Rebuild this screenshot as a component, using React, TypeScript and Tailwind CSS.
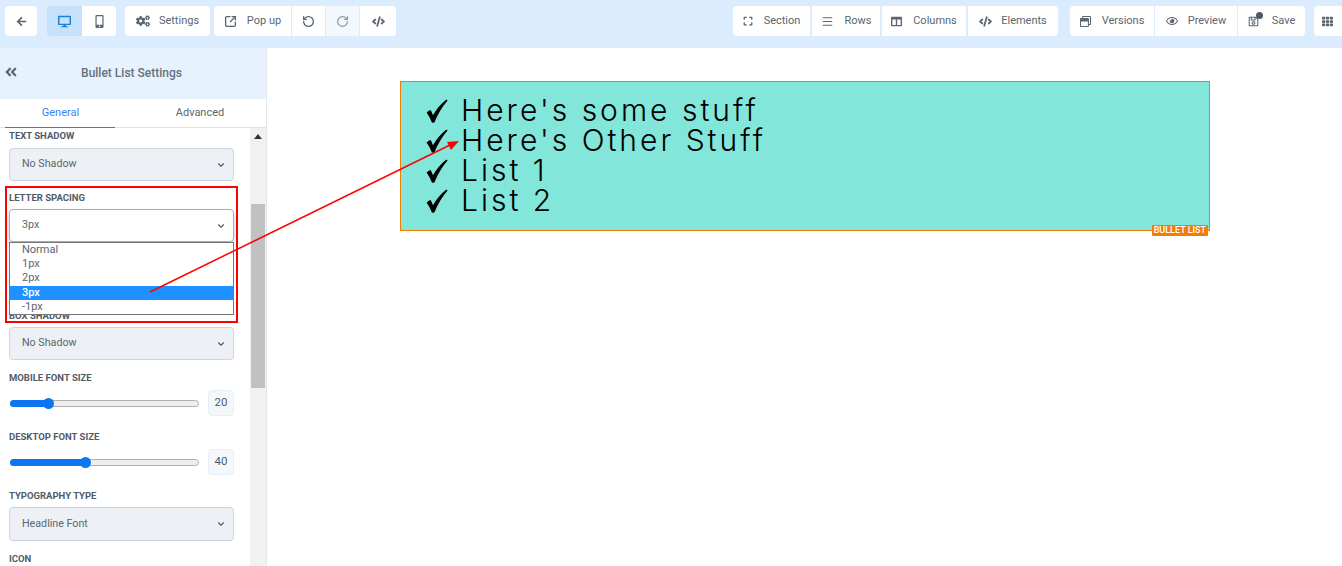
import type { ReactNode } from "react";
import {
  FaAngleDoubleLeft,
  FaArrowLeft,
  FaCode,
  FaCogs,
  FaColumns,
  FaDesktop,
  FaExpand,
  FaMobileAlt,
  FaRegEye,
  FaRegSave,
  FaRegWindowRestore,
  FaTh,
} from "react-icons/fa";
import { ChevronDown, Menu, RotateCcw, RotateCw, SquareArrowOutUpRight } from "lucide-react";

function ToolButton({
  icon,
  label,
  className = "",
}: {
  icon: ReactNode;
  label?: string;
  className?: string;
}) {
  return (
    <div className={`flex h-[30px] items-center justify-center gap-[9px] bg-white text-[11px] text-[#5b6670] ${className}`}>
      {icon}
      {label && <span>{label}</span>}
    </div>
  );
}

function FieldLabel({ children, className = "" }: { children: ReactNode; className?: string }) {
  return (
    <div className={`h-3 text-[9.5px] leading-3 font-bold text-[#4f5b67] uppercase ${className}`}>
      {children}
    </div>
  );
}

function SelectBox({
  value,
  active = false,
  className = "",
}: {
  value: string;
  active?: boolean;
  className?: string;
}) {
  return (
    <div
      className={`flex items-center justify-between rounded-[4px] border pr-[7px] pl-3 text-[10.7px] text-[#5b6670] ${
        active ? "border-[#a3adba] bg-white" : "border-[#cdd5df] bg-[#edf1f6]"
      } ${className}`}
    >
      <span>{value}</span>
      <ChevronDown size={10} strokeWidth={2.6} className="text-[#4f5b67]" />
    </div>
  );
}

function SliderRow({ value, fill }: { value: string; fill: string }) {
  return (
    <div className="mt-1.5 flex h-[26px] items-center justify-between">
      <div className="relative ml-px h-[7px] w-[189px] rounded-full border border-[#b0b0b0] bg-[#eeeeee]">
        <div className={`absolute top-[-1px] left-[-1px] h-[7px] rounded-l-full bg-[#0b76f0] ${fill}`}>
          <div className="absolute top-[-2px] right-[-5px] h-[11px] w-[11px] rounded-full bg-[#0b76f0]" />
        </div>
      </div>
      <div className="flex h-[26px] w-[26px] items-center justify-center rounded-[4px] border border-[#e8eef4] bg-[#f4f8fb] text-[11.5px] text-[#4f5b67]">
        {value}
      </div>
    </div>
  );
}

function CheckMark() {
  return (
    <svg width="22" height="24" viewBox="0 0 22 24" className="shrink-0">
      <path d="M0.6 13.4 Q3 11.4 4.6 11 Q6 13.4 7 16.2 Q12 7 20.4 0.4 L21.6 1.4 Q13 11.4 8.4 23.6 L6 23.8 Q3.6 17.4 0.6 13.4 Z" fill="#000000" />
    </svg>
  );
}

const LIST_ITEMS = ["Here's some stuff", "Here's Other Stuff", "List 1", "List 2"];
const OPTIONS = ["Normal", "1px", "2px", "3px", "-1px"];

export default function App() {
  return (
    <div className="relative flex h-[566px] w-[1342px] flex-col overflow-hidden bg-white font-['Roboto',sans-serif]">
      {/* Top toolbar */}
      <header className="flex h-12 shrink-0 items-start justify-between bg-[#dbecfe] pt-1.5 pl-[5px]">
        <div className="flex items-center">
          <ToolButton icon={<FaArrowLeft size={11} />} className="w-8 rounded-[4px] text-[#4b5563]" />
          <div className="ml-2.5 flex overflow-hidden rounded-[4px]">
            <ToolButton icon={<FaDesktop size={13} className="text-[#1b7fd6]" />} className="w-[35px] !bg-[#c5e1fc]" />
            <ToolButton icon={<FaMobileAlt size={13} />} className="w-[34px]" />
          </div>
          <ToolButton icon={<FaCogs size={14} />} label="Settings" className="ml-[9px] w-[85px] rounded-[4px] text-[#4f5b67]" />
          <div className="ml-1 flex gap-px">
            <ToolButton
              icon={<SquareArrowOutUpRight size={13} strokeWidth={2.4} />}
              label="Pop up"
              className="w-[77px] rounded-l-[4px] gap-[10px]"
            />
            <ToolButton icon={<RotateCcw size={13} strokeWidth={2.4} />} className="w-[33px]" />
            <ToolButton icon={<RotateCw size={13} strokeWidth={2.2} className="text-[#8d97a1]" />} className="w-[33px] !bg-[#f3f8fe]" />
            <ToolButton icon={<FaCode size={13} />} className="w-9 rounded-r-[4px]" />
          </div>
        </div>
        <div className="flex items-center">
          <div className="flex gap-0.5">
            <ToolButton icon={<FaExpand size={10} />} label="Section" className="w-[77px] rounded-l-[4px] gap-[11px]" />
            <ToolButton icon={<Menu size={13} />} label="Rows" className="w-[68px] gap-[11px]" />
            <ToolButton icon={<FaColumns size={11} />} label="Columns" className="w-[84px] gap-[11px]" />
            <ToolButton icon={<FaCode size={13} />} label="Elements" className="w-[90px] rounded-r-[4px]" />
          </div>
          <div className="ml-3 flex gap-px">
            <ToolButton icon={<FaRegWindowRestore size={11} />} label="Versions" className="w-[84px] rounded-l-[4px] gap-[11px]" />
            <ToolButton icon={<FaRegEye size={12} />} label="Preview" className="w-[82px] gap-[10px]" />
            <ToolButton
              icon={
                <span className="relative">
                  <FaRegSave size={11} />
                  <span className="absolute top-[-4px] right-[-4px] h-[7px] w-[7px] rounded-full bg-[#4a5868]" />
                </span>
              }
              label="Save"
              className="w-[67px] rounded-r-[4px] gap-[13px]"
            />
          </div>
          <ToolButton icon={<FaTh size={11} />} className="ml-[9px] w-7 rounded-l-[4px] !justify-start pl-2" />
        </div>
      </header>

      <div className="flex min-h-0 flex-1">
        {/* Settings sidebar */}
        <aside className="flex w-[267px] shrink-0 flex-col border-r border-[#e4e6e9]">
          <div className="relative flex h-[51px] shrink-0 items-center justify-center bg-[#e6f2fe] pr-[3px] pb-0.5 text-[12px] font-medium text-[#66707b]">
            <FaAngleDoubleLeft size={14} className="absolute top-[17px] left-[4px] text-[#5b6670]" />
            <span>Bullet List Settings</span>
          </div>
          <div className="flex h-[29px] shrink-0 border-b border-[#dfe3e8] text-[11px]">
            <div className="ml-[5px] flex h-[29px] w-[110px] items-center justify-center border-b border-[#2b7fe0] pl-[1px] text-[#3b82f6]">
              General
            </div>
            <div className="flex flex-1 items-center justify-center pl-[19px] text-[#5b6670]">Advanced</div>
          </div>

          <div className="flex min-h-0 flex-1">
            {/* Field list, scrolled part way down */}
            <div className="relative min-w-0 flex-1 overflow-hidden pr-[16px] pl-[9px]">
              <FieldLabel className="mt-0.5">Text Shadow</FieldLabel>
              <SelectBox value="No Shadow" className="mt-1.5 h-[33px]" />
              <FieldLabel className="mt-[11px]">Letter Spacing</FieldLabel>
              <SelectBox value="3px" active className="mt-[5px] h-[33px] shadow-[0_4px_6px_rgba(0,0,0,0.18)]" />
              <FieldLabel className="mt-[68px]">Box Shadow</FieldLabel>
              <SelectBox value="No Shadow" className="mt-[5px] h-[33px]" />
              <FieldLabel className="mt-3">Mobile Font Size</FieldLabel>
              <SliderRow value="20" fill="w-[39px]" />
              <FieldLabel className="mt-[15px]">Desktop Font Size</FieldLabel>
              <SliderRow value="40" fill="w-[76px]" />
              <FieldLabel className="mt-[15px]">Typography Type</FieldLabel>
              <SelectBox value="Headline Font" className="mt-[5px] h-[34px]" />
              <FieldLabel className="mt-3">Icon</FieldLabel>
            </div>
            {/* Scrollbar */}
            <div className="relative w-4 shrink-0 bg-[#f1f1f1]">
              <div className="absolute top-[6px] left-[4px] h-0 w-0 border-x-[4px] border-b-[5px] border-x-transparent border-b-[#333333]" />
              <div className="absolute top-[76px] left-px h-[184px] w-[14px] bg-[#c1c1c1]" />
            </div>
          </div>
        </aside>

        {/* Canvas */}
        <main className="min-w-0 flex-1 pt-[33px] pl-[133px]">
          <div className="relative flex h-[150px] w-[810px] flex-col border border-[#f57c00] bg-[#83e6da] pt-[14px] pl-[25px] font-['Inter',sans-serif] text-[30px] leading-[30px] font-light tracking-[3px] text-black">
            {LIST_ITEMS.map((item) => (
              <div key={item} className="flex h-[30px] items-center gap-[13px]">
                <CheckMark />
                <span className="pb-0.5">{item}</span>
              </div>
            ))}
            <div className="absolute right-px bottom-[-6px] flex h-[11px] items-center rounded-[1px] bg-[#f57c00] px-[2px] font-['Roboto',sans-serif] text-[9px] leading-none font-medium tracking-normal text-white">
              BULLET LIST
            </div>
          </div>
        </main>
      </div>

      {/* Open select list */}
      <div className="absolute top-[242px] left-[9px] w-[225px] border border-[#767676] bg-white text-[11px] leading-[13px] text-[#5b6670]">
        {OPTIONS.map((option) => (
          <div key={option} className={`h-[14.2px] pl-3 ${option === "3px" ? "bg-[#1e90ff] font-medium text-white" : ""}`}>
            {option}
          </div>
        ))}
      </div>

      {/* Annotation */}
      <div className="pointer-events-none absolute top-[186px] left-[5px] h-[137px] w-[233px] border-2 border-[#ff0000]" />
      <svg className="pointer-events-none absolute top-0 left-0" width="1342" height="566" viewBox="0 0 1342 566">
        <line x1="150" y1="292" x2="450" y2="145" stroke="#ff0000" strokeWidth="1.5" />
        <polygon points="459,141 447,142 451,150" fill="#ff0000" />
      </svg>
    </div>
  );
}
